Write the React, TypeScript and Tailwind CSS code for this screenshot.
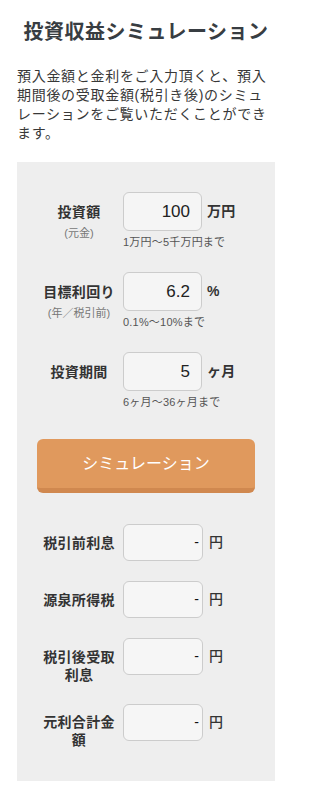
const font = { fontFamily: '"Liberation Sans", "Noto Sans CJK JP", sans-serif' };

type InputRow = {
  label: string;
  sub?: string;
  value: string;
  unit: string;
  hint: string;
};

const inputRows: InputRow[] = [
  { label: '投資額', sub: '(元金)', value: '100', unit: '万円', hint: '1万円～5千万円まで' },
  { label: '目標利回り', sub: '(年／税引前)', value: '6.2', unit: '%', hint: '0.1%～10%まで' },
  { label: '投資期間', value: '5', unit: 'ヶ月', hint: '6ヶ月～36ヶ月まで' },
];

const resultRows = ['税引前利息', '源泉所得税', '税引後受取利息', '元利合計金額'];

export default function App() {
  return (
    <div className="min-h-screen w-[290px] bg-white pl-[17px] pr-[15px] text-[#333]" style={font}>
      {/* Title */}
      <h1 className="pt-[18px] text-center text-[20px] font-bold leading-[28px] tracking-[0.5px] text-[#383d42]">
        投資収益シミュレーション
      </h1>

      {/* Intro */}
      <p className="mt-[21px] text-[14px] leading-[19px] tracking-[0.7px] text-[#383838]">
        預入金額と金利をご入力頂くと、預入期間後の受取金額(税引き後)のシミュレーションをご覧いただくことができます。
      </p>

      {/* Simulator panel */}
      <div className="mt-[19px] bg-[#eeeeee] px-[20px] pt-[30px] pb-[32px]">
        <div className="flex flex-col gap-[22px]">
          {inputRows.map((row) => (
            <div key={row.label} className="flex items-start gap-[5px] pl-[3px]">
              <div className="w-[78px] shrink-0 pt-[9.5px] text-center">
                <div className="text-[14px] font-bold leading-[20px] tracking-[0.3px] text-[#333]">
                  {row.label}
                </div>
                {row.sub && (
                  <div className="mt-[3px] text-[11px] leading-[16px] text-[#777]">{row.sub}</div>
                )}
              </div>
              <div>
                <div className="flex items-center gap-[5px]">
                  <input
                    readOnly
                    value={row.value}
                    className="h-[39px] w-[79px] rounded-[6px] border border-[#cccccc] bg-[#f5f5f5] pr-[11px] text-right text-[17px] font-normal text-[#222] outline-none"
                    style={font}
                  />
                  <span className="text-[14px] font-bold tracking-[0.3px] text-[#333]">{row.unit}</span>
                </div>
                <div className="mt-[3px] text-[11px] leading-[16px] tracking-[0.2px] text-[#555]">{row.hint}</div>
              </div>
            </div>
          ))}
        </div>

        <button
          type="button"
          className="mt-[29px] h-[54px] w-full rounded-[6px] border-b-[5px] border-[#d0884f] bg-[#e0995d] text-[16px] text-white"
          style={font}
        >
          シミュレーション
        </button>

        {/* Results */}
        <div className="mt-[31px] flex flex-col gap-[20px]">
          {resultRows.map((label) => (
            <div key={label} className="flex items-start gap-[5px] pl-[3px]">
              <div className="w-[78px] shrink-0 pt-[9.5px] text-center text-[14px] font-bold leading-[18px] tracking-[0.3px] text-[#333]">
                {label}
              </div>
              <div className="flex items-center gap-[6px]">
                <div className="flex h-[37px] w-[80px] items-center justify-end rounded-[6px] border border-[#cccccc] bg-[#f6f6f6] pr-[3px] text-[14px] text-[#111]">
                  -
                </div>
                <span className="text-[14px] font-medium text-[#333]">円</span>
              </div>
            </div>
          ))}
        </div>
      </div>
    </div>
  );
}
